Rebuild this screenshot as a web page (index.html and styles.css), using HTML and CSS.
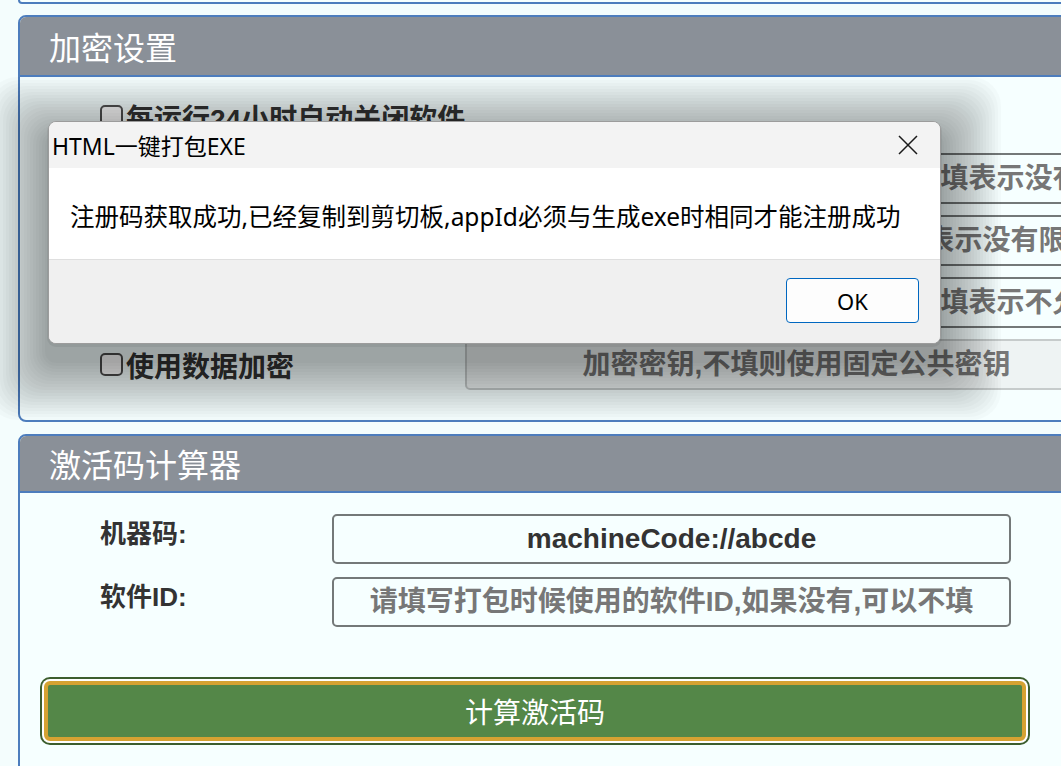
FILE: index.html
```html
<!DOCTYPE html>
<html lang="zh-CN">
<head>
<meta charset="utf-8">
<title>HTML一键打包EXE</title>
<link rel="stylesheet" href="styles.css">
</head>
<body>
<div class="page">
  <div class="panel-tail"></div>

  <section class="panel">
    <header class="panel-head">加密设置</header>
    <div class="panel-body settings">
      <label class="check check-wide"><input type="checkbox">每运行24小时自动关闭软件</label>

      <label class="check"><input type="checkbox">限制使用次数</label>
      <input class="field" type="text" placeholder="请填写软件允许运行的最大天数,不填表示没有">

      <label class="check"><input type="checkbox">限制试用天数</label>
      <input class="field" type="text" placeholder="请填写软件可以试用的总天数,不填表示没有限制">

      <label class="check"><input type="checkbox">限制多开数量</label>
      <input class="field" type="text" placeholder="请填写允许同时运行的最大实例数,不填表示不允许">

      <label class="check"><input type="checkbox">使用数据加密</label>
      <input class="field" type="text" placeholder="加密密钥,不填则使用固定公共密钥" disabled>
    </div>
  </section>

  <section class="panel">
    <header class="panel-head panel-head-sm">激活码计算器</header>
    <div class="panel-body calc">
      <div class="calc-grid">
        <span class="calc-label">机器码:</span>
        <input class="field field-calc" type="text" value="machineCode://abcde">
        <span class="calc-label">软件ID:</span>
        <input class="field field-calc" type="text" placeholder="请填写打包时候使用的软件ID,如果没有,可以不填">
      </div>
      <button class="calc-btn" type="button">计算激活码</button>
    </div>
  </section>
</div>

<div class="dialog" role="dialog">
  <div class="dialog-title">
    <span>HTML一键打包EXE</span>
    <svg class="dialog-close" width="20" height="20" viewBox="0 0 20 20"><path d="M1 1 L19 19 M19 1 L1 19" stroke="#1a1a1a" stroke-width="1.5" fill="none"/></svg>
  </div>
  <div class="dialog-body">注册码获取成功,已经复制到剪切板,appId必须与生成exe时相同才能注册成功</div>
  <div class="dialog-foot">
    <button class="ok-btn" type="button">OK</button>
  </div>
</div>
</body>
</html>
```

FILE: styles.css
```css
html, body {
  margin: 0;
  overflow: hidden;
}

body {
  width: 1061px;
  height: 766px;
  position: relative;
  background: #f4fdfd;
  font-family: "Liberation Sans", "Noto Sans CJK SC", sans-serif;
}

.page {
  width: 1160px;
  padding-left: 18px;
}

.panel-tail {
  height: 2px;
  border: 2px solid #4d7dbd;
  border-top: 0;
  border-radius: 0 0 8px 8px;
  background: #f6ffff;
}

.panel {
  margin-top: 11px;
  border: 2px solid #4d7dbd;
  border-radius: 8px;
  background: #f6ffff;
  overflow: hidden;
}

.panel + .panel {
  margin-top: 12px;
}

.panel-head {
  height: 58px;
  line-height: 58px;
  padding-left: 29px;
  background: #8a9098;
  border-bottom: 2px solid #4d7dbd;
  color: #fff;
  font-size: 32px;
  font-family: "Noto Sans CJK SC", sans-serif;
}

.panel-head-sm {
  height: 55px;
  line-height: 55px;
}

.settings {
  display: grid;
  grid-template-columns: 365px 663px;
  grid-auto-rows: 51px;
  row-gap: 11px;
  padding: 14px 0 30px 80px;
}

.check {
  display: flex;
  align-items: center;
  font-size: 28px;
  font-weight: bold;
  color: #333;
  white-space: nowrap;
}

.check-wide {
  grid-column: 1 / span 2;
}

.check input {
  appearance: none;
  -webkit-appearance: none;
  box-sizing: border-box;
  width: 23px;
  height: 23px;
  margin: 0 3px 0 0;
  border: 2px solid #555;
  border-radius: 5px;
  background: #fff;
}

.field {
  box-sizing: border-box;
  width: 663px;
  height: 51px;
  padding: 0;
  border: 2px solid #747979;
  border-radius: 5px;
  background: #f6ffff;
  color: #333;
  text-align: center;
  font-family: "Liberation Sans", "Noto Sans CJK SC", sans-serif;
  font-size: 28px;
  font-weight: bold;
  outline: none;
}

.field::placeholder {
  color: #777;
  opacity: 1;
}

.field:disabled {
  border-color: #c6cbcb;
  background: #eef3f3;
}

.calc {
  padding: 21px 0 40px 0;
}

.calc-grid {
  display: grid;
  grid-template-columns: 232px 679px;
  row-gap: 13px;
  padding-left: 80px;
}

.calc-label {
  align-self: start;
  line-height: 40px;
  font-size: 26px;
  font-weight: bold;
  color: #333;
}

.field-calc {
  width: 679px;
  height: 50px;
}

.calc-btn {
  display: block;
  box-sizing: border-box;
  width: 982px;
  height: 60px;
  margin: 54px 0 0 24px;
  border: 4px solid #d5a232;
  border-radius: 6px;
  box-shadow: 0 0 0 2px #fff, 0 0 0 4px #3c5e2e;
  background: #548748;
  color: #fff;
  font-family: "Noto Sans CJK SC", sans-serif;
  font-size: 28px;
}

.dialog {
  position: absolute;
  left: 48px;
  top: 121px;
  width: 893px;
  height: 223px;
  box-sizing: border-box;
  display: flex;
  flex-direction: column;
  border: 1px solid #9c9c9c;
  border-radius: 8px;
  background: #f0f0f0;
  overflow: hidden;
  /* soft drop shadow built from stacked spread rings */
  box-shadow:
    0 2px 0 1px rgba(0, 0, 0, 0.06),
    0 16px 0 3px rgba(0, 0, 0, 0.018),
    0 16px 0 6px rgba(0, 0, 0, 0.018),
    0 16px 0 9px rgba(0, 0, 0, 0.018),
    0 16px 0 12px rgba(0, 0, 0, 0.018),
    0 16px 0 15px rgba(0, 0, 0, 0.018),
    0 16px 0 18px rgba(0, 0, 0, 0.018),
    0 16px 0 21px rgba(0, 0, 0, 0.018),
    0 16px 0 24px rgba(0, 0, 0, 0.018),
    0 16px 0 27px rgba(0, 0, 0, 0.018),
    0 16px 0 30px rgba(0, 0, 0, 0.018),
    0 16px 0 33px rgba(0, 0, 0, 0.018),
    0 16px 0 36px rgba(0, 0, 0, 0.018),
    0 16px 0 39px rgba(0, 0, 0, 0.018),
    0 16px 0 42px rgba(0, 0, 0, 0.018),
    0 16px 0 45px rgba(0, 0, 0, 0.018),
    0 16px 0 48px rgba(0, 0, 0, 0.018),
    0 16px 0 51px rgba(0, 0, 0, 0.018),
    0 16px 0 54px rgba(0, 0, 0, 0.018),
    0 16px 0 57px rgba(0, 0, 0, 0.018),
    0 16px 0 60px rgba(0, 0, 0, 0.018);
  font-family: "Noto Sans", "Noto Sans CJK SC", sans-serif;
  color: #000;
}

.dialog-title {
  height: 46px;
  display: flex;
  align-items: center;
  justify-content: space-between;
  padding: 0 22px 0 3px;
  background: #f3f3f3;
  font-size: 23px;
}

.dialog-close {
  display: block;
}

.dialog-body {
  height: 92px;
  box-sizing: border-box;
  display: flex;
  align-items: center;
  padding: 4px 0 0 21px;
  background: #fff;
  border-bottom: 1px solid #dfdfdf;
  font-size: 24.5px;
  white-space: nowrap;
}

.dialog-foot {
  flex: 1;
  display: flex;
  justify-content: flex-end;
  align-items: flex-start;
  padding: 18px 21px 0 0;
  background: #f0f0f0;
}

.ok-btn {
  width: 133px;
  height: 45px;
  border: 1px solid #0067c0;
  border-radius: 4px;
  background: #fdfdfd;
  color: #000;
  font-family: "Noto Sans", sans-serif;
  font-size: 22px;
}
```
